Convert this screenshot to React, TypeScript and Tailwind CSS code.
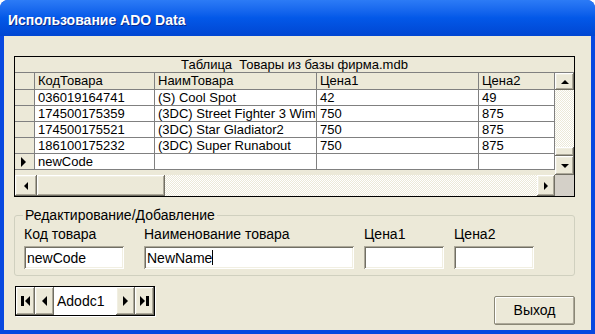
const raised =
  "bg-[#ECE9D8] shadow-[inset_-1px_-1px_#716F64,inset_1px_1px_#ffffff,inset_-2px_-2px_#ACA899,inset_2px_2px_#F1EFE2]";
const sunken =
  "bg-white shadow-[inset_1px_1px_#ACA899,inset_-1px_-1px_#ffffff,inset_2px_2px_#716F64,inset_-2px_-2px_#F1EFE2]";
const checker =
  "bg-[repeating-conic-gradient(#ECE9D8_0%_25%,#ffffff_0%_50%)] bg-[length:2px_2px]";

const cols = [20, 120, 162, 162, 76];

const rows = [
  ["036019164741", "(S) Cool Spot", "42", "49"],
  ["174500175359", "(3DC) Street Fighter 3 Wimpy", "750", "875"],
  ["174500175521", "(3DC) Star Gladiator2", "750", "875"],
  ["186100175232", "(3DC) Super Runabout", "750", "875"],
  ["newCode", "", "", ""],
];

function Tri({ dir, big }: { dir: "up" | "down" | "left" | "right"; big?: boolean }) {
  const vertical = dir === "up" || dir === "down";
  const a = big ? 5 : 4; // depth
  const b = big ? 10 : 8; // base
  const w = vertical ? b : a;
  const h = vertical ? a : b;
  const pts = {
    up: `0,${a} ${b},${a} ${b / 2},0`,
    down: `0,0 ${b},0 ${b / 2},${a}`,
    left: `${a},0 ${a},${b} 0,${b / 2}`,
    right: `0,0 0,${b} ${a},${b / 2}`,
  }[dir];
  return (
    <svg width={w} height={h} viewBox={`0 0 ${w} ${h}`}>
      <polygon points={pts} fill="#000" />
    </svg>
  );
}

function EdgeArrow({ dir }: { dir: "first" | "last" }) {
  return (
    <svg width="9" height="10" viewBox="0 0 9 10">
      {dir === "first" ? (
        <>
          <rect x="0" y="0" width="3" height="10" fill="#000" />
          <polygon points="9,0 9,10 4,5" fill="#000" />
        </>
      ) : (
        <>
          <polygon points="0,0 0,10 5,5" fill="#000" />
          <rect x="6" y="0" width="3" height="10" fill="#000" />
        </>
      )}
    </svg>
  );
}

function Cell({ w, children, head }: { w: number; children?: React.ReactNode; head?: boolean }) {
  return (
    <div
      style={{ width: w }}
      className={`shrink-0 h-full border-r border-[#808080] pl-[3px] pt-[1px] leading-[14px] overflow-hidden whitespace-nowrap ${
        head ? "bg-[#ECE9D8]" : "bg-white"
      }`}
    >
      {children}
    </div>
  );
}

function DataGrid() {
  return (
    <div className="w-[561px] h-[141px] border border-black bg-[#ECE9D8] flex flex-col text-[13px] text-black">
      <div className="h-[16px] border-b border-[#808080] text-center leading-[15px] whitespace-pre">
        Таблица  Товары из базы фирма.mdb
      </div>
      <div className="flex h-[102px]">
        <div className="w-[540px] flex flex-col">
          <div className="flex h-[17px] border-b border-[#808080]">
            <Cell w={cols[0]} head />
            <Cell w={cols[1]} head>КодТовара</Cell>
            <Cell w={cols[2]} head>НаимТовара</Cell>
            <Cell w={cols[3]} head>Цена1</Cell>
            <Cell w={cols[4]} head>Цена2</Cell>
          </div>
          {rows.map((r, i) => (
            <div key={i} className="flex h-[16px] border-b border-[#808080]">
              <div
                style={{ width: cols[0] }}
                className="shrink-0 h-full border-r border-[#808080] bg-[#ECE9D8] flex items-center pl-[6px]"
              >
                {i === rows.length - 1 && <Tri dir="right" big />}
              </div>
              {r.map((v, j) => (
                <Cell key={j} w={cols[j + 1]}>
                  {v}
                </Cell>
              ))}
            </div>
          ))}
        </div>
        <div className="w-[19px] flex flex-col">
          <div className={`h-[17px] flex items-center justify-center ${raised}`}>
            <Tri dir="up" />
          </div>
          <div className={`flex-1 flex flex-col justify-end ${checker}`}>
            <div className={`h-[9px] ${raised}`} />
          </div>
          <div className={`h-[19px] flex items-center justify-center ${raised}`}>
            <Tri dir="down" />
          </div>
        </div>
      </div>
      <div className="flex h-[21px]">
        <div className="w-[540px] flex">
          <div className={`w-[22px] flex items-center justify-center ${raised}`}>
            <Tri dir="left" />
          </div>
          <div className={`w-[128px] ${raised}`} />
          <div className={`flex-1 ${checker}`} />
          <div className={`w-[18px] flex items-center justify-center ${raised}`}>
            <Tri dir="right" />
          </div>
        </div>
        <div className="w-[19px] bg-[#D4D0C8]" />
      </div>
    </div>
  );
}

function Field({ label, value, w, ml, caret }: { label: string; value: string; w: number; ml: number; caret?: boolean }) {
  return (
    <div style={{ marginLeft: ml }} className="flex flex-col">
      <div className="leading-[16px] whitespace-nowrap">{label}</div>
      <div style={{ width: w }} className={`mt-[4px] h-[23px] flex items-center pl-[3px] leading-[16px] ${sunken}`}>
        {value}
        {caret && <span className="w-px h-[15px] bg-black" />}
      </div>
    </div>
  );
}

export default function App() {
  return (
    <div className="w-[595px] h-[334px] bg-white">
      <div
        className="w-[595px] h-[334px] rounded-t-[8px] bg-[#0848E0] flex flex-col overflow-hidden"
        style={{ fontFamily: '"Liberation Sans", Arial, sans-serif' }}
      >
        <div className="h-[36px] shrink-0 bg-gradient-to-b from-[#2C7BF6] via-[#0358E8] to-[#0146D2] flex items-center pt-[4px] pl-[8px]">
          <span className="text-white font-bold text-[14px] leading-[20px] [text-shadow:1px_1px_#0B2B8C]">
            Использование ADO Data
          </span>
        </div>
        <div className="flex-1 mx-[4px] mb-[4px] bg-[#ECE9D8] pl-[10px] pt-[20px] flex flex-col text-[14px] text-black">
          <DataGrid />

          <fieldset className="mt-[10px] w-[561px] h-[69px] border border-[#D0D0BF] rounded-[3px]">
            <legend className="ml-[8px] px-[2px] leading-[16px]">Редактирование/Добавление</legend>
            <div className="flex mt-[3px]">
              <Field label="Код товара" value="newCode" w={100} ml={9} />
              <Field label="Наименование товара" value="NewName" w={210} ml={20} caret />
              <Field label="Цена1" value="" w={80} ml={10} />
              <Field label="Цена2" value="" w={80} ml={10} />
            </div>
          </fieldset>

          <div className="flex items-start mt-[10px]">
            <div className="ml-[1px] h-[30px] w-[140px] border border-black flex shadow-[1px_1px_0_#ffffff]">
              <div className={`w-[19px] flex items-center justify-center ${raised}`}>
                <EdgeArrow dir="first" />
              </div>
              <div className={`w-[19px] flex items-center justify-center ${raised}`}>
                <Tri dir="left" big />
              </div>
              <div className="flex-1 bg-white flex items-center pl-[3px]">Adodc1</div>
              <div className={`w-[19px] flex items-center justify-center ${raised}`}>
                <Tri dir="right" big />
              </div>
              <div className={`w-[19px] flex items-center justify-center ${raised}`}>
                <EdgeArrow dir="last" />
              </div>
            </div>
            <button className="ml-auto mr-[16px] mt-[10px] w-[81px] h-[29px] rounded-[2px] border border-[#8A8776] bg-[#ECE9D8] shadow-[inset_-1px_-1px_#ACA899,inset_1px_1px_#ffffff] flex items-center justify-center">
              Выход
            </button>
          </div>
        </div>
      </div>
    </div>
  );
}
